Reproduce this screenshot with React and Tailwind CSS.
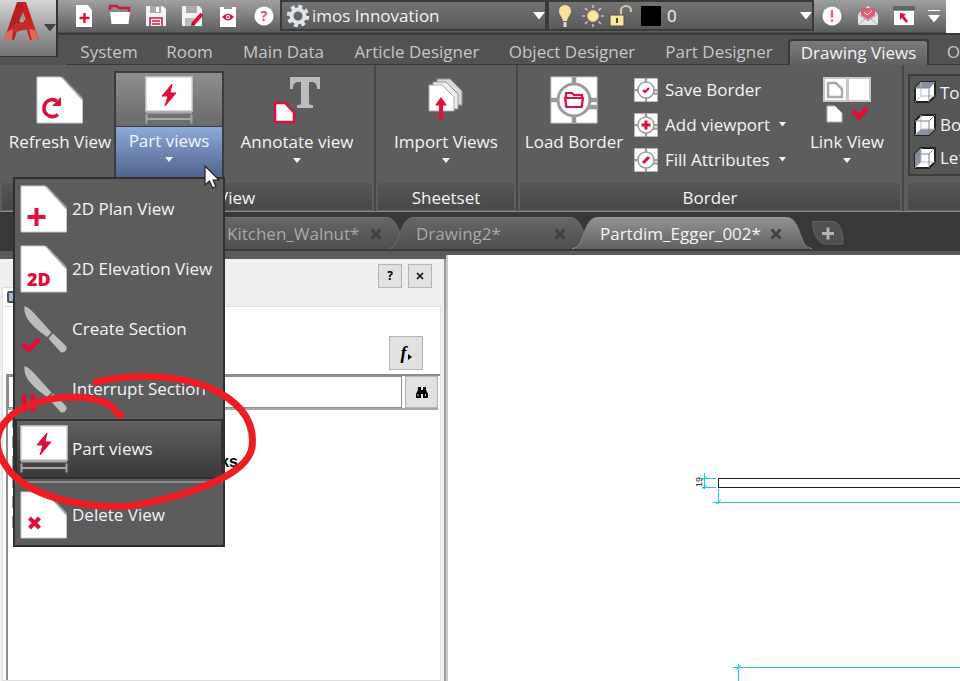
// App.jsx

/* ---------- icons ---------- */

const RED = "#dc1038";

function PageIcon({ className = "size-12", children }) {
  return (
    <svg viewBox="0 0 48 48" className={className}>
      <path d="M24 1h3L47 22v4z" fill="#9a9a9a" />
      <path d="M1 1h24l21.500 23.500V47H1z" fill="#fff" stroke="#c9c9c9" strokeWidth="1" />
      {children}
    </svg>
  );
}

function RefreshIcon() {
  return (
    <PageIcon>
      <path d="M22 38.500a8.500 8.500 0 1 1-1-13.500" fill="none" stroke={RED} strokeWidth="3.600" />
      <path d="M25 21v9h-9z" fill={RED} />
    </PageIcon>
  );
}

function PlanIcon() {
  return (
    <PageIcon>
      <path d="M16.500 23v18M7.500 32h18" stroke={RED} strokeWidth="4" />
    </PageIcon>
  );
}

function ElevationIcon() {
  return (
    <PageIcon>
      <text x="7" y="41" fill={RED} fontSize="18" fontWeight="800" fontFamily="Open Sans, sans-serif">
        2D
      </text>
    </PageIcon>
  );
}

function DeleteIcon() {
  return (
    <PageIcon>
      <path d="M9.500 27l10 10M19.500 27l-10 10" stroke={RED} strokeWidth="4" />
    </PageIcon>
  );
}

function PartIcon() {
  return (
    <svg viewBox="0 0 48 48" className="size-12">
      <path d="M1 1h46v34H1z" fill="#fff" stroke="#cfcfcf" strokeWidth="1.500" />
      <path d="M1 36.500h46" stroke="#a8a8a8" strokeWidth="2" />
      <path d="M27 8L17 20h6l-3 10 11-13h-6z" fill={RED} stroke={RED} strokeWidth="1" />
      <path d="M1.500 38.500v9M46.500 38.500v9M2 43h44" stroke="#a6a6a6" strokeWidth="2" />
    </svg>
  );
}

function KnifeIcon({ children }) {
  return (
    <svg viewBox="0 0 48 48" className="size-12">
      <path d="M4.500 1c5 2 9 6 13 11l14 15.500-4.500 4.500C15 23 3 14 4.500 1z" fill="#bdbdbd" />
      <path d="M33 28.500l13 12.500c2 3-1 7-5 6.500L28.500 33.500z" fill="#bdbdbd" />
      {children}
    </svg>
  );
}

function SectionIcon() {
  return (
    <KnifeIcon>
      <path d="M3 39l6 6 10-11" fill="none" stroke={RED} strokeWidth="5" />
    </KnifeIcon>
  );
}

function InterruptIcon() {
  return (
    <KnifeIcon>
      <path d="M4 29v18M13 29v18" stroke={RED} strokeWidth="4.500" />
    </KnifeIcon>
  );
}

function AnnotateIcon() {
  return (
    <svg viewBox="0 0 48 48" className="size-12">
      <path d="M17 1h30v12h-3c0-5-2-7-5-7h-3v20c0 3 1 3 4 3v3H24v-3c3 0 4 0 4-3V6h-3c-3 0-5 2-5 7h-3z" fill="#bcbcbc" />
      <path d="M2 27h10l9 9.500V46H2z" fill="#fff" stroke={RED} strokeWidth="2.500" />
    </svg>
  );
}

function ImportIcon() {
  return (
    <svg viewBox="0 0 48 48" className="size-12">
      <path d="M15 3h13l12 12v14H15z" fill="#d8d8d8" stroke="#999" />
      <path d="M11 6h13l12 12v15H11z" fill="#eee" stroke="#999" />
      <path d="M7 9h13l12 12v14H7z" fill="#fff" stroke="#aaa" />
      <path d="M19 44V27" stroke={RED} strokeWidth="4" />
      <path d="M13 29.500l6-8.500 6 8.500z" fill={RED} />
    </svg>
  );
}

function BorderIcon({ className = "size-6", children }) {
  return (
    <svg viewBox="0 0 48 48" className={className}>
      <path d="M1 1h46v46H1z" fill="#fff" stroke="#c8c8c8" />
      <path d="M24 0v48M0 24h48M36 31h12" stroke="#9b9b9b" strokeWidth="4.500" />
      <circle cx="24" cy="24" r="16" fill="#fff" stroke="#9b9b9b" strokeWidth="3" />
      {children}
    </svg>
  );
}

function LinkIcon() {
  return (
    <svg viewBox="0 0 48 48" className="size-12">
      <path d="M0 1h48v25H0z" fill="#c8c8c8" />
      <path d="M2 3h21v21H2zM26 3h20v21H26z" fill="#fff" />
      <path d="M5 7h8l6 6v8H5z" fill="#fff" stroke="#aaa" strokeWidth="2.500" />
      <path d="M4 30h8l7 7v9H4z" fill="#fff" stroke="#b5b5b5" />
      <path d="M30 35l6 6 8-9" fill="none" stroke={RED} strokeWidth="5" />
    </svg>
  );
}

const cubeFaces = {
  top: "M2 8l6-6h14l-6 6z",
  bottom: "M2 22l6-6h14l-6 6z",
  left: "M2 8l6-6v14l-6 6z",
};

function CubeIcon({ face }) {
  return (
    <svg viewBox="0 0 24 24" className="size-6 shrink-0">
      <path d="M2 8l6-6h14v14l-6 6H2z" fill="#fff" stroke="#222" strokeWidth="2" />
      <path d={cubeFaces[face]} fill="#8791a0" />
      <path d="M8 2v14h14M8 16l-6 6" fill="none" stroke="#b9bdc4" strokeWidth="1" />
      <path d="M2 8h14v14M16 8l6-6" fill="none" stroke="#7d828a" strokeWidth="1" />
    </svg>
  );
}

function Caret({ className = "w-2" }) {
  return (
    <svg viewBox="0 0 8 5" className={className}>
      <path d="M0 0h8L4 5z" fill="currentColor" />
    </svg>
  );
}

const quickIcons = [
  {
    label: "New",
    art: (
      <>
        <path d="M4 1h12l4 5v17H4z" fill="#fff" />
        <path d="M12.500 9v10M7.500 14h10" stroke={RED} strokeWidth="2.400" />
      </>
    ),
  },
  {
    label: "Open",
    art: (
      <>
        <path d="M2 6V2h7l2 2h10v4" fill="none" stroke="#c8203c" strokeWidth="2.500" />
        <path d="M2 8h20l-1.500 12h-17z" fill="#fff" />
      </>
    ),
  },
  {
    label: "Save",
    art: (
      <>
        <path d="M2 2h17l3 3v17H2z" fill="#f4f4f4" />
        <path d="M6 2h11v7H6z" fill="#aaa" />
        <path d="M12 3h3v5h-3z" fill="#fff" />
        <path d="M6 22v-8h12v8M8 17h8M8 20h8" fill="none" stroke={RED} strokeWidth="1.500" />
      </>
    ),
  },
  {
    label: "Save as",
    art: (
      <>
        <path d="M2 2h17l3 3v17H2z" fill="#f4f4f4" />
        <path d="M6 2h11v7H6z" fill="#aaa" />
        <path d="M5 22v-8h10v8z" fill="#bbb" />
        <path d="M13 20l9-10" stroke={RED} strokeWidth="4" />
        <path d="M11 22l1-4 3 3z" fill="#8d1528" />
      </>
    ),
  },
  {
    label: "Preview",
    art: (
      <>
        <path d="M4 3h16v20H4z" fill="#fff" />
        <path d="M8 2h8v3H8z" fill="#999" />
        <path d="M6 13q6-7 12 0q-6 7-12 0z" fill={RED} />
        <circle cx="12" cy="13" r="2.200" fill="#fff" />
        <circle cx="12" cy="13" r="1" fill={RED} />
      </>
    ),
  },
  {
    label: "Help",
    art: (
      <>
        <circle cx="12" cy="12" r="9.500" fill="#fff" />
        <text x="12" y="17" textAnchor="middle" fill="#e8496a" fontSize="14" fontWeight="700" fontFamily="Open Sans, sans-serif">
          ?
        </text>
      </>
    ),
  },
];

const endIcons = [
  {
    label: "Alerts",
    art: (
      <>
        <circle cx="12" cy="12" r="9.500" fill="#fff" />
        <path d="M12 6v7.500M12 15.500v2.500" stroke="#e8607a" strokeWidth="2.400" />
      </>
    ),
  },
  {
    label: "Messages",
    art: (
      <>
        <path d="M2 10l10-8 10 8v11H2z" fill="#e6e6e6" />
        <path d="M5 4h14v7l-7 5-7-5z" fill="#dd5f74" />
        <path d="M8 8l3 3 5-4" fill="none" stroke="#fff" />
        <path d="M2 10l10 7 10-7M2 21l7-6M22 21l-7-6" fill="none" stroke="#aaa" />
      </>
    ),
  },
  {
    label: "Window",
    art: (
      <>
        <path d="M1 2h22v4H1z" fill="#666" />
        <path d="M2 7h20v14H2z" fill="#fff" />
        <path d="M8 9l6 1-2 2 4 5-2 2-4-5-2 2z" fill={RED} />
      </>
    ),
  },
];

function QuickButton({ icon }) {
  return (
    <button aria-label={icon.label} className="flex w-9 items-center justify-center">
      <svg viewBox="0 0 24 24" className="size-6">
        {icon.art}
      </svg>
    </button>
  );
}

/* ---------- header ---------- */

function AppButton() {
  return (
    <button
      aria-label="Application menu"
      className="flex h-[57px] w-[58px] shrink-0 items-start gap-1 border-r-2 border-b border-[#333] bg-linear-to-b from-[#d6d6d6] to-[#727272] pl-1 text-[#39424f]"
    >
      <svg viewBox="0 0 36 42" className="h-[42px] w-9 shrink-0">
        <path d="M13 2h9l13 38h-9L16 9z" fill="#d3201f" />
        <path d="M13 2h6l1 8L10 40H0z" fill="#b32222" />
        <path d="M3 32C10 22 18 21 28 22l3 8c-9-1-17 0-28 6z" fill="#c42c29" />
        <path d="M3 32l6-3-1 11H0zM25 29l6 1 4 10h-7z" fill="#db6a5f" />
        <path d="M15 21l4-9 3 8z" fill="#999" />
      </svg>
      <Caret className="mt-6 w-3 shrink-0" />
    </button>
  );
}

function QuickBar() {
  return (
    <div className="flex h-[33px] bg-white">
      <div className="flex min-w-0 border-b border-[#4a4a4a] bg-linear-to-b from-[#a0a0a0] to-[#5e5e5e] pl-2">
        {quickIcons.map((icon) => (
          <QuickButton key={icon.label} icon={icon} />
        ))}

        <div className="relative -ml-0.5 flex h-[31px] w-[267px] items-center border-2 border-[#3a3a3a] bg-linear-to-b from-[#747474] to-[#5a5a5a] pl-1">
          <svg viewBox="0 0 24 24" className="size-6 shrink-0">
            <circle cx="12" cy="12" r="9.500" fill="none" stroke="#dfe4ea" strokeWidth="3.500" strokeDasharray="4 3.460" />
            <circle cx="12" cy="12" r="6.500" fill="none" stroke="#dfe4ea" strokeWidth="4" />
          </svg>
          <select aria-label="Workspace" className="min-w-0 flex-1 appearance-none pl-0.5 text-[17px] text-gray-100 outline-none">
            <option>imos Innovation</option>
          </select>
          <span className="pointer-events-none absolute right-0 text-white">
            <Caret className="w-3" />
          </span>
        </div>

        <div className="relative flex h-[31px] w-[267px] items-center gap-1 border-2 border-[#3a3a3a] bg-linear-to-b from-[#747474] to-[#5a5a5a] pl-1">
          <svg viewBox="0 0 24 24" className="size-6 shrink-0">
            <path d="M12 1a6 6 0 0 0-6 6c0 4 3 5 4 10h4c1-5 4-6 4-10a6 6 0 0 0-6-6z" fill="#fbe29a" />
            <path d="M12 18v5" stroke="#ddd" strokeWidth="3" />
          </svg>
          <svg viewBox="0 0 24 24" className="size-6 shrink-0">
            <circle cx="12" cy="12" r="5.500" fill="#fbe6a3" stroke="#d8c48a" />
            <path
              d="M12 1v3M12 20v3M1 12h3M20 12h3M4 4l2.500 2.500M17.500 17.500L20 20M20 4l-2.500 2.500M6.500 17.500L4 20"
              stroke="#c9c9c9"
              strokeWidth="1.500"
            />
          </svg>
          <svg viewBox="0 0 24 24" className="size-6 shrink-0">
            <path d="M12 11V6c0-2 2-4 5-4s5 2 5 4v2" fill="none" stroke="#cfc7a8" strokeWidth="2.200" />
            <path d="M1 11h14v11H1z" fill="#fbe6a3" stroke="#554d33" />
            <path d="M8 14v5" stroke="#554d33" strokeWidth="2" />
          </svg>
          <span className="ml-1 size-5 shrink-0 bg-black" />
          <select aria-label="Layer" className="min-w-0 flex-1 appearance-none pl-0.5 text-[17px] text-gray-100 outline-none">
            <option>0</option>
          </select>
          <span className="pointer-events-none absolute right-0 text-white">
            <Caret className="w-3" />
          </span>
        </div>

        {endIcons.map((icon) => (
          <QuickButton key={icon.label} icon={icon} />
        ))}
        <button aria-label="Customize toolbar" className="flex w-6 flex-col items-center justify-center gap-1 text-white">
          <span className="h-px w-3 bg-white" />
          <Caret className="w-3" />
        </button>
      </div>
    </div>
  );
}

const ribbonTabs = [
  { name: "System", width: "w-[86px]" },
  { name: "Room", width: "w-[75px]" },
  { name: "Main Data", width: "w-[113px]" },
  { name: "Article Designer", width: "w-[154px]" },
  { name: "Object Designer", width: "w-[156px]" },
  { name: "Part Designer", width: "w-[138px]" },
  { name: "Drawing Views", width: "w-[141px]", active: true },
  { name: "Output", width: "w-[92px]" },
];

function RibbonTabs() {
  return (
    <nav className="flex h-8 overflow-hidden border-t-2 border-[#3a3a3a] bg-[#525252] pl-2">
      {ribbonTabs.map((tab) => (
        <button
          key={tab.name}
          className={`${tab.width} shrink-0 text-center text-[17px] leading-6 whitespace-nowrap ${
            tab.active
              ? "mt-1 rounded-t-sm border-2 border-b-0 border-[#383838] bg-linear-to-b from-[#7a7a7a] to-[#606060] text-gray-100"
              : "border-b border-[#383838] pt-1 text-[#c6c6c6]"
          }`}
        >
          {tab.name}
        </button>
      ))}
    </nav>
  );
}

/* ---------- ribbon ---------- */

function BigButton({ icon, label, width, caret }) {
  return (
    <button className={`${width} flex shrink-0 flex-col items-center pt-[11px] text-[17px] whitespace-nowrap text-gray-100`}>
      {icon}
      <span className="mt-1.5 leading-6">{label}</span>
      {caret && <Caret className="mt-1 w-2" />}
    </button>
  );
}

function SmallButton({ icon, label, caret }) {
  return (
    <button className="flex h-[35px] items-center gap-[7px] text-[17px] whitespace-nowrap text-gray-100">
      {icon}
      {label}
      {caret && <Caret className="ml-0.5 w-[7px]" />}
    </button>
  );
}

function Panel({ width, title, titleClass = "justify-center", children }) {
  return (
    <section className={`${width} flex flex-col border-r-2 border-[#464646]`}>
      <div className="flex h-[118px]">{children}</div>
      <h2
        className={`${titleClass} mx-0.5 flex h-7 items-center border-b border-[#686868] bg-linear-to-b from-[#555] to-[#484848] pt-0.5 text-[17px] text-gray-100`}
      >
        {title}
      </h2>
    </section>
  );
}

const menuItems = [
  { label: "2D Plan View", icon: <PlanIcon /> },
  { label: "2D Elevation View", icon: <ElevationIcon /> },
  { label: "Create Section", icon: <SectionIcon /> },
  { label: "Interrupt Section", icon: <InterruptIcon /> },
  { label: "Part views", icon: <PartIcon />, active: true },
  { label: "Delete View", icon: <DeleteIcon />, separated: true },
];

function ViewsMenu() {
  return (
    <ul className="absolute top-full -left-[103px] z-20 w-[212px] border-2 border-[#303030] bg-[#5c5c5c]">
      {menuItems.map((item) => (
        <li key={item.label} className={item.separated ? "mt-0.5 border-t-2 border-[#8a8a8a] pt-0.5" : ""}>
          <button
            className={`flex h-[60px] w-full items-center gap-1 border-2 pl-[3px] text-left text-[17px] whitespace-nowrap text-gray-100 ${
              item.active ? "border-[#303030] bg-linear-to-b from-[#606060] to-[#3a3a3a]" : "border-transparent"
            }`}
          >
            {item.icon}
            {item.label}
          </button>
        </li>
      ))}
    </ul>
  );
}

function PartViewsSplit() {
  return (
    <div className="relative mt-1.5 flex h-[106px] w-[110px] shrink-0 flex-col border-2 border-b-0 border-[#3c3c3c]">
      <button
        aria-label="Create part views"
        className="flex h-[53px] items-center justify-center bg-linear-to-b from-[#8e8e8e] to-[#6a6a6a]"
      >
        <PartIcon />
      </button>
      <button
        aria-expanded="true"
        className="flex flex-1 flex-col items-center border-t border-[#3c3c3c] bg-linear-to-b from-[#8cabdc] to-[#50658b] pt-0.5 text-[17px] leading-6 text-gray-100"
      >
        Part views
        <Caret className="mt-1 w-2" />
      </button>
      <ViewsMenu />
      <svg viewBox="0 0 16 24" className="absolute top-[92px] left-[88px] z-30 h-6 w-4">
        <path d="M1 1v19l4.500-4 3 7 3.500-1.500-3-6.500h6z" fill="#fff" stroke="#222" strokeWidth="1.200" />
      </svg>
    </div>
  );
}

function Ribbon() {
  return (
    <div className="flex border-b border-[#8a8a8a] bg-[#5d5d5d]">
      <Panel width="w-[376px] shrink-0" title="View" titleClass="justify-start pl-[216px]">
        <BigButton width="w-[114px] pl-1.5" label="Refresh View" icon={<RefreshIcon />} />
        <PartViewsSplit />
        <BigButton width="w-[146px]" label="Annotate view" icon={<AnnotateIcon />} caret />
      </Panel>
      <Panel width="w-[142px] shrink-0" title="Sheetset">
        <BigButton width="w-full" label="Import Views" icon={<ImportIcon />} caret />
      </Panel>
      <Panel width="w-[386px] shrink-0" title="Border">
        <BigButton
          width="w-[112px]"
          label="Load Border"
          icon={
            <BorderIcon className="size-12">
              <path d="M16 30V17h6l2 2h8v11z" fill="#fff" stroke={RED} strokeWidth="2.200" />
              <path d="M15 22h18l-1.500 9h-15z" fill="#fff" stroke={RED} strokeWidth="2.200" />
            </BorderIcon>
          }
        />
        <div className="flex w-[162px] shrink-0 flex-col pt-[7px] pl-1">
          <SmallButton
            label="Save Border"
            icon={
              <BorderIcon>
                <path d="M18 24l4 4 8-8" fill="none" stroke={RED} strokeWidth="4.500" />
              </BorderIcon>
            }
          />
          <SmallButton
            label="Add viewport"
            caret
            icon={
              <BorderIcon>
                <path d="M24 15v18M15 24h18" stroke={RED} strokeWidth="6" />
              </BorderIcon>
            }
          />
          <SmallButton
            label="Fill Attributes"
            caret
            icon={
              <BorderIcon>
                <path d="M18 30l12-12" stroke={RED} strokeWidth="6" />
              </BorderIcon>
            }
          />
        </div>
        <BigButton width="w-[110px]" label="Link View" icon={<LinkIcon />} caret />
      </Panel>
      <section className="flex min-w-0 flex-1 flex-col overflow-hidden pl-1">
        <div className="h-[118px] pt-[9px]">
          <div className="flex h-[102px] w-[160px] flex-col border-2 border-[#3c3c3c] bg-[#565656] pl-[3px]">
            {[
              ["top", "Top"],
              ["bottom", "Bottom"],
              ["left", "Left"],
            ].map(([face, label]) => (
              <button key={face} className="flex h-[33px] items-center gap-[3px] text-[17px] text-gray-100">
                <CubeIcon face={face} />
                {label}
              </button>
            ))}
          </div>
        </div>
        <div className="h-7 border-b border-[#686868] bg-linear-to-b from-[#555] to-[#484848]" />
      </section>
    </div>
  );
}

/* ---------- file tabs ---------- */

function TabCap({ active, flip }) {
  const id = `cap-${active ? "on" : "off"}-${flip ? "l" : "r"}`;
  return (
    <svg viewBox="0 0 26 32" className={`h-8 w-[26px] shrink-0 ${flip ? "-scale-x-100" : ""}`}>
      <linearGradient id={id} x1="0" y1="0" x2="0" y2="1">
        <stop offset="0" stopColor={active ? "#929292" : "#666"} />
        <stop offset="1" stopColor={active ? "#626262" : "#4f4f4f"} />
      </linearGradient>
      <path d="M0 0C16 0 12 32 26 32H0z" fill={`url(#${id})`} />
      <path d="M0 .5C16 .5 12 31.500 26 31.500" fill="none" stroke={active ? "#8a8a8a" : "#6b6b6b"} />
    </svg>
  );
}

const files = [
  { name: "Kitchen_Walnut*", width: "w-[213px]" },
  { name: "Drawing2*", width: "w-[208px] -ml-6" },
  { name: "Partdim_Egger_002*", width: "w-[240px] -ml-6 z-10", active: true },
];

function FileTabs() {
  return (
    <div className="flex h-[43px] items-start overflow-hidden border-b-4 border-[#5a5a5a] bg-[#383838] pt-[5px] pl-[199px]">
      {files.map((file) => (
        <div key={file.name} className={`${file.width} relative flex h-8 shrink-0`}>
          <TabCap active={file.active} flip />
          <div
            className={`flex flex-1 items-center justify-between border-t bg-linear-to-b pl-0.5 text-[17px] whitespace-nowrap ${
              file.active
                ? "border-[#9a9a9a] from-[#929292] to-[#626262] text-gray-100"
                : "border-[#707070] from-[#666] to-[#4f4f4f] text-[#a8a8a8]"
            }`}
          >
            <span>{file.name}</span>
            <button aria-label={`Close ${file.name}`} className="mr-1 text-[#404040]">
              <svg viewBox="0 0 12 12" className="size-3">
                <path d="M1.500 1.500l9 9M10.500 1.500l-9 9" stroke="currentColor" strokeWidth="3" />
              </svg>
            </button>
          </div>
          <TabCap active={file.active} />
        </div>
      ))}
      <button aria-label="New drawing" className="mt-1">
        <svg viewBox="0 0 32 24" className="h-6 w-8">
          <path d="M.5 .5H20c7 0 11 8 11 22.500H14C6 23 .5 12 .5 .5z" fill="#505050" stroke="#646464" />
          <path d="M16 6.500v12M10 12.500h12" stroke="#b4b4b4" strokeWidth="3" />
        </svg>
      </button>
    </div>
  );
}

/* ---------- workspace ---------- */

const boxButton = "flex items-center justify-center border border-[#b4b4b4] bg-[#e1e1e1] text-black";

function SidePanel() {
  return (
    <aside className="flex w-[446px] shrink-0 flex-col border-t-4 border-[#5a5a5a] bg-[#efefef]">
      <div className="flex flex-1 flex-col border-r-2 border-[#9a9a9a] pr-[3px]">
        <header className="flex h-[47px] justify-between">
          <div className="mt-7 ml-0.5 flex w-[120px] items-center border-t border-l border-[#dcdcdc] bg-white pl-1">
            <span className="size-3 rounded-xs border-2 border-[#555] bg-[#9db7dd]" />
          </div>
          <div className="flex gap-1.5 pt-[5px] pr-[9px]">
            <button className={`${boxButton} size-6 text-xs font-bold`}>?</button>
            <button aria-label="Close panel" className={`${boxButton} size-6`}>
              <svg viewBox="0 0 8 8" className="size-2">
                <path d="M1 1l6 6M7 1L1 7" stroke="#111" strokeWidth="1.600" />
              </svg>
            </button>
          </div>
        </header>

        <div className="ml-0.5 flex flex-1 flex-col border border-[#dedede] bg-white">
          <div className="flex h-[67px] items-end justify-end pr-[17px] pb-1">
            <button
              aria-label="Function"
              className={`${boxButton} size-[34px] gap-px font-['Liberation_Serif',serif] text-lg font-bold italic`}
            >
              <span>f</span>
              <svg viewBox="0 0 4 6" className="mt-2 h-1.5 w-1">
                <path d="M0 0v6l4-3z" />
              </svg>
            </button>
          </div>

          <div className="ml-[3px] flex flex-1 flex-col border-t-2 border-l-2 border-[#8c8c8c]">
            <div className="mr-0.5 flex h-[34px] gap-[3px] border-b-2 border-[#a8a8a8]">
              <input aria-label="Search" className="min-w-0 flex-1 border border-[#8c8c8c] bg-white px-2 text-sm outline-none" />
              <button aria-label="Find" className={`${boxButton} w-[33px]`}>
                <svg viewBox="0 0 12 12" className="size-3">
                  <path d="M2 1h3v3h2V1h3v3l2 4v4H7V8H5v4H0V8l2-4z" />
                  <path d="M2 8v2M9.500 8v2" stroke="#ddd" />
                </svg>
              </button>
            </div>
            <ul className="pt-0.5 pl-1">
              {["", "", "ks", "", "", ""].map((text, i) => (
                <li key={i} className="flex h-5 items-center justify-between">
                  <span className="h-3 w-2.5 border border-[#9a9a9a]" />
                  <span className="mr-[202px] font-['Liberation_Sans',sans-serif] text-base font-bold text-black">{text}</span>
                </li>
              ))}
            </ul>
          </div>
        </div>
      </div>
    </aside>
  );
}

function Drawing() {
  return (
    <main className="relative min-w-0 flex-1 overflow-hidden border-l-2 border-[#c8c8c8] bg-white">
      {/* part outline with its dimension lines */}
      <svg className="absolute inset-0 size-full" shapeRendering="crispEdges">
        <rect x="270.500" y="223.500" width="2000" height="9" fill="none" stroke="#222" />
        <path
          d="M256.500 218v16M254 223.500h14M254 232.500h14M270.500 234v15M265 247.500h2000M290.500 409v20M285 412.500h2000"
          stroke="#1cc3fb"
          fill="none"
        />
        <path d="M254 225l5-4M254 234l5-4M268 249l5-4M288 415l5-5" stroke="#1cc3fb" shapeRendering="auto" />
        <text transform="translate(254 232) rotate(-90)" fontSize="9" fontFamily="Liberation Sans, sans-serif" fill="#111">
          19
        </text>
      </svg>
    </main>
  );
}

function Marker() {
  return (
    <svg viewBox="0 0 264 150" className="pointer-events-none absolute top-[365px] left-0 z-40 h-[150px] w-[264px]">
      <path
        d="M96 17C130 8 178 10 208 22C242 37 255 58 252 82C248 112 180 133 130 141C78 144 28 130 8 104C-8 82 -6 66 12 50C34 32 84 26 108 39C117 44 115 49 121 50"
        fill="none"
        stroke="#ee1c24"
        strokeWidth="7"
        strokeLinecap="round"
        strokeLinejoin="round"
      />
    </svg>
  );
}

export default function App() {
  return (
    <div className="relative flex min-h-screen flex-col overflow-hidden bg-[#5a5a5a] font-['Open_Sans','Noto_Sans',sans-serif]">
      <header className="flex bg-[#525252]">
        <AppButton />
        <div className="min-w-0 flex-1">
          <QuickBar />
          <RibbonTabs />
        </div>
      </header>
      <Ribbon />
      <FileTabs />
      <div className="flex flex-1">
        <SidePanel />
        <Drawing />
      </div>
      <Marker />
    </div>
  );
}
